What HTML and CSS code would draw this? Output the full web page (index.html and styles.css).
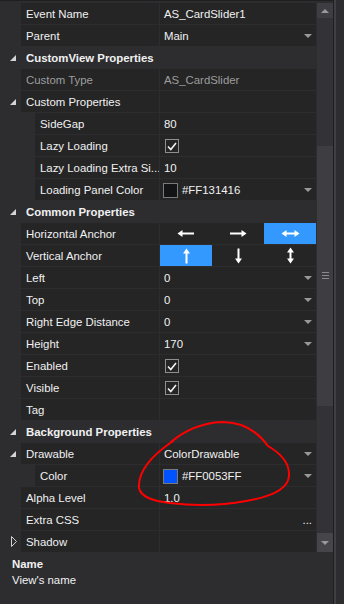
FILE: index.html
```html
<!DOCTYPE html>
<html lang="en">

<head>
    <meta charset="UTF-8">
    <meta name="viewport" content="width=device-width, initial-scale=1.0">
    <title>Properties</title>
    <link rel="stylesheet" href="styles.css">
</head>

<body>
    <div class="frame">
        <div class="panel">
            <div class="main">
                <div class="grid">
                    <div class="row">
                        <div class="gut"></div>
                        <div class="name">Event Name</div>
                        <div class="val">AS_CardSlider1</div>
                    </div>
                    <div class="row">
                        <div class="gut"></div>
                        <div class="name">Parent</div>
                        <div class="val">Main<span class="dd"></span></div>
                    </div>
                    <div class="row head">
                        <div class="gut"><span class="open"></span></div>
                        <div class="name">CustomView Properties</div>
                    </div>
                    <div class="row dim">
                        <div class="gut"></div>
                        <div class="name">Custom Type</div>
                        <div class="val">AS_CardSlider</div>
                    </div>
                    <div class="row">
                        <div class="gut"><span class="open"></span></div>
                        <div class="name">Custom Properties</div>
                        <div class="val"></div>
                    </div>
                    <div class="row">
                        <div class="gut"></div>
                        <div class="indent"></div>
                        <div class="name">SideGap</div>
                        <div class="val">80</div>
                    </div>
                    <div class="row">
                        <div class="gut"></div>
                        <div class="indent"></div>
                        <div class="name">Lazy Loading</div>
                        <div class="val"><span class="chk"><svg width="10" height="9" viewBox="0 0 10 9"><path d="M1 4.5 L3.8 7.5 L9 1" fill="none" stroke="#f1f1f1" stroke-width="1.6"/></svg></span></div>
                    </div>
                    <div class="row">
                        <div class="gut"></div>
                        <div class="indent"></div>
                        <div class="name">Lazy Loading Extra Si...</div>
                        <div class="val">10</div>
                    </div>
                    <div class="row">
                        <div class="gut"></div>
                        <div class="indent"></div>
                        <div class="name">Loading Panel Color</div>
                        <div class="val"><span class="sw sw-dark"></span>#FF131416<span class="dd"></span></div>
                    </div>
                    <div class="row head">
                        <div class="gut"><span class="open"></span></div>
                        <div class="name">Common Properties</div>
                    </div>
                    <div class="row">
                        <div class="gut"></div>
                        <div class="name">Horizontal Anchor</div>
                        <div class="val anchor">
                            <div class="anc"><svg width="18" height="9" viewBox="0 0 18 9"><path d="M0.5 4.5 L5.5 1 V8 Z" fill="#fff"/><rect x="4" y="3.5" width="13" height="2" fill="#fff"/></svg></div>
                            <div class="anc"><svg width="18" height="9" viewBox="0 0 18 9"><path d="M17.5 4.5 L12.5 1 V8 Z" fill="#fff"/><rect x="1" y="3.5" width="13" height="2" fill="#fff"/></svg></div>
                            <div class="anc on"><svg width="19" height="9" viewBox="0 0 19 9"><path d="M0.5 4.5 L5.5 1 V8 Z M18.5 4.5 L13.5 1 V8 Z" fill="#fff"/><rect x="4" y="3.5" width="11" height="2" fill="#fff"/></svg></div>
                        </div>
                    </div>
                    <div class="row">
                        <div class="gut"></div>
                        <div class="name">Vertical Anchor</div>
                        <div class="val anchor">
                            <div class="anc on"><svg width="9" height="16" viewBox="0 0 9 16"><path d="M4.5 0.5 L1 5.5 H8 Z" fill="#fff"/><rect x="3.5" y="4" width="2" height="11.5" fill="#fff"/></svg></div>
                            <div class="anc"><svg width="9" height="16" viewBox="0 0 9 16"><path d="M4.5 15.5 L1 10.5 H8 Z" fill="#fff"/><rect x="3.5" y="0.5" width="2" height="11.5" fill="#fff"/></svg></div>
                            <div class="anc"><svg width="9" height="17" viewBox="0 0 9 17"><path d="M4.5 0.5 L1 5.5 H8 Z M4.5 16.5 L1 11.5 H8 Z" fill="#fff"/><rect x="3.5" y="4" width="2" height="9" fill="#fff"/></svg></div>
                        </div>
                    </div>
                    <div class="row">
                        <div class="gut"></div>
                        <div class="name">Left</div>
                        <div class="val">0<span class="dd"></span></div>
                    </div>
                    <div class="row">
                        <div class="gut"></div>
                        <div class="name">Top</div>
                        <div class="val">0<span class="dd"></span></div>
                    </div>
                    <div class="row">
                        <div class="gut"></div>
                        <div class="name">Right Edge Distance</div>
                        <div class="val">0<span class="dd"></span></div>
                    </div>
                    <div class="row">
                        <div class="gut"></div>
                        <div class="name">Height</div>
                        <div class="val">170<span class="dd"></span></div>
                    </div>
                    <div class="row">
                        <div class="gut"></div>
                        <div class="name">Enabled</div>
                        <div class="val"><span class="chk"><svg width="10" height="9" viewBox="0 0 10 9"><path d="M1 4.5 L3.8 7.5 L9 1" fill="none" stroke="#f1f1f1" stroke-width="1.6"/></svg></span></div>
                    </div>
                    <div class="row">
                        <div class="gut"></div>
                        <div class="name">Visible</div>
                        <div class="val"><span class="chk"><svg width="10" height="9" viewBox="0 0 10 9"><path d="M1 4.5 L3.8 7.5 L9 1" fill="none" stroke="#f1f1f1" stroke-width="1.6"/></svg></span></div>
                    </div>
                    <div class="row">
                        <div class="gut"></div>
                        <div class="name">Tag</div>
                        <div class="val"></div>
                    </div>
                    <div class="row head">
                        <div class="gut"><span class="open"></span></div>
                        <div class="name">Background Properties</div>
                    </div>
                    <div class="row">
                        <div class="gut"><span class="open"></span></div>
                        <div class="name">Drawable</div>
                        <div class="val">ColorDrawable<span class="dd"></span></div>
                    </div>
                    <div class="row">
                        <div class="gut"></div>
                        <div class="indent"></div>
                        <div class="name">Color</div>
                        <div class="val"><span class="sw sw-blue"></span>#FF0053FF<span class="dd"></span></div>
                    </div>
                    <div class="row">
                        <div class="gut"></div>
                        <div class="name">Alpha Level</div>
                        <div class="val">1.0</div>
                    </div>
                    <div class="row">
                        <div class="gut"></div>
                        <div class="name">Extra CSS</div>
                        <div class="val"><span class="more">...</span></div>
                    </div>
                    <div class="row">
                        <div class="gut"><svg class="closed" width="6" height="11" viewBox="0 0 6 11"><path d="M0.5 0.5 L5.5 5.5 L0.5 10.5 Z" fill="none" stroke="#d0d0d0"/></svg></div>
                        <div class="name">Shadow</div>
                        <div class="val"></div>
                    </div>
                </div>

                <div class="scroll">
                    <div class="sb-btn"><span class="sb-up"></span></div>
                    <div class="sb-track top"></div>
                    <div class="sb-thumb">
                        <span class="grip"></span>
                        <span class="grip"></span>
                        <span class="grip"></span>
                    </div>
                    <div class="sb-track"></div>
                    <div class="sb-btn down"><span class="sb-down"></span></div>
                </div>
            </div>

            <div class="desc">
                <div class="desc-title">Name</div>
                <div>View's name</div>
            </div>
        </div>
        <div class="rim"></div>

        <!-- red marker drawn over the screenshot -->
        <svg class="mark" width="344" height="604" viewBox="0 0 344 604">
            <path d="M171 442 C183 432 200 423 222 422 C244 422 258 432 268 446 C280 453 290 462 289 476 C288 490 270 497 246 501 C224 505 196 506 170 503 C152 501 141 497 139 488 C138 474 148 458 173 441"
                fill="none" stroke="#f00" stroke-width="2" stroke-linecap="round"/>
        </svg>
    </div>
</body>

</html>
```

FILE: styles.css
```css
* {
    box-sizing: border-box;
}

body {
    margin: 0;
    background: #2d2d30;
    font-family: "Liberation Sans", Arial, sans-serif;
    font-size: 11.4px;
    color: #f1f1f1;
}

.frame {
    position: relative;
    width: 344px;
    height: 604px;
    display: flex;
}

.panel {
    width: 333px;
    display: flex;
    flex-direction: column;
}

.main {
    display: flex;
    padding-top: 3px;
    border-top: 1px solid #1f1f20;
}

.grid {
    width: 316px;
    display: flex;
    flex-direction: column;
    gap: 1px;
    margin-top: -1px;
}

.row {
    display: flex;
    height: 21px;
    line-height: 21px;
}

.gut {
    width: 21px;
    flex: none;
    display: flex;
    align-items: center;
    padding-left: 10px;
}

.indent {
    width: 14px;
    flex: none;
}

.name {
    flex: 1;
    min-width: 0;
    background: #252526;
    padding: 1px 0 0 5px;
    white-space: nowrap;
    overflow: hidden;
}

.val {
    width: 156px;
    flex: none;
    margin-left: 1px;
    background: #252526;
    padding: 1px 0 0 4px;
    display: flex;
    align-items: center;
    white-space: nowrap;
}

.head .name {
    background: none;
    font-weight: bold;
}

.dim .name,
.dim .val {
    color: #9d9d9d;
}

.open {
    width: 0;
    height: 0;
    border-left: 6px solid transparent;
    border-bottom: 6px solid #d4d4d4;
}

.closed {
    margin-left: 1px;
}

.dd {
    margin-left: auto;
    margin-right: 4px;
    width: 0;
    height: 0;
    border-left: 4px solid transparent;
    border-right: 4px solid transparent;
    border-top: 4px solid #999;
}

.more {
    margin-left: auto;
    margin-right: 4px;
}

.chk {
    width: 14px;
    height: 14px;
    margin-left: 1px;
    border: 1px solid #8f8f8f;
    display: flex;
    align-items: center;
    justify-content: center;
}

.sw {
    width: 15px;
    height: 15px;
    margin-left: -1px;
    margin-right: 4px;
    border: 1px solid #7a7a7a;
}

.sw-dark {
    background: #131416;
}

.sw-blue {
    background: #0053ff;
}

.val.anchor {
    padding: 0;
}

.anc {
    flex: 1;
    height: 100%;
    display: flex;
    align-items: center;
    justify-content: center;
}

.anc.on {
    background: #3399ff;
}

.scroll {
    width: 16px;
    margin-left: 1px;
    margin-top: -1px;
    display: flex;
    flex-direction: column;
    background: #333337;
}

.sb-btn {
    height: 15px;
    background: #3e3e42;
    display: flex;
    align-items: center;
    justify-content: center;
}

.sb-btn.down {
    height: 19px;
    background: #46464a;
}

.sb-up {
    width: 0;
    height: 0;
    border-left: 4px solid transparent;
    border-right: 4px solid transparent;
    border-bottom: 4px solid #999;
}

.sb-down {
    width: 0;
    height: 0;
    border-left: 4px solid transparent;
    border-right: 4px solid transparent;
    border-top: 4px solid #999;
}

.sb-track.top {
    height: 35px;
}

.sb-track {
    flex: 1;
}

.sb-thumb {
    height: 260px;
    background: #3e3e42;
    display: flex;
    flex-direction: column;
    align-items: center;
    justify-content: center;
    gap: 2px;
}

.grip {
    width: 7px;
    height: 1px;
    background: #8a8a8a;
}

.desc {
    flex: 1;
    padding: 4px 0 0 12px;
    line-height: 16px;
}

.desc-title {
    font-weight: bold;
}

.rim {
    width: 11px;
    background: linear-gradient(to right, #1f1f20 0 1px, #3f3f46 1px 3px, #2d2d30 3px);
}

.mark {
    position: absolute;
    left: 0;
    top: 0;
    pointer-events: none;
}
```
